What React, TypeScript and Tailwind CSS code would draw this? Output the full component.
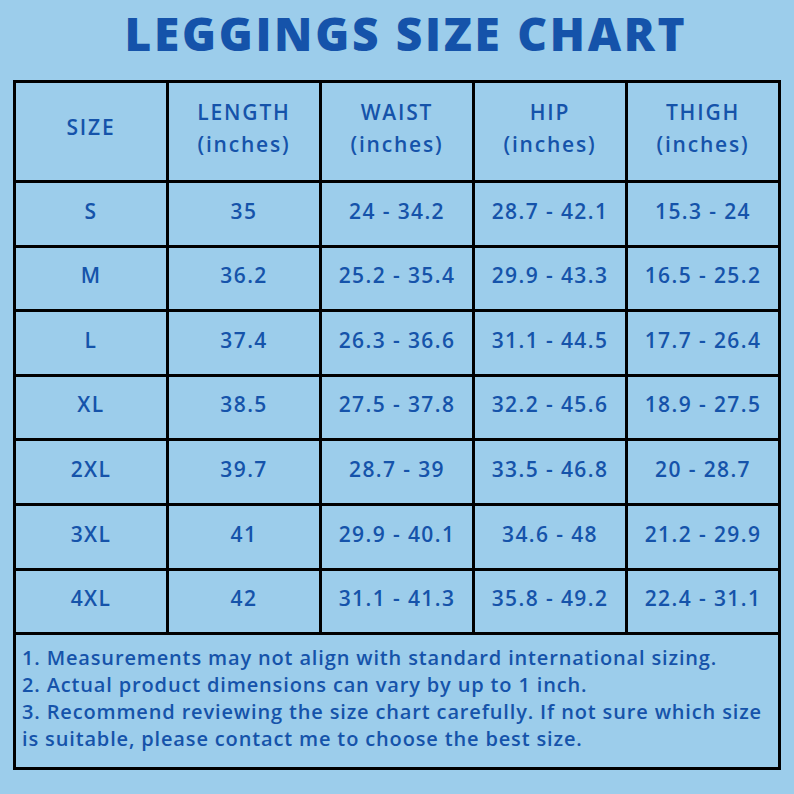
import React from "react";

const rows = [
  ["S", "35", "24 - 34.2", "28.7 - 42.1", "15.3 - 24"],
  ["M", "36.2", "25.2 - 35.4", "29.9 - 43.3", "16.5 - 25.2"],
  ["L", "37.4", "26.3 - 36.6", "31.1 - 44.5", "17.7 - 26.4"],
  ["XL", "38.5", "27.5 - 37.8", "32.2 - 45.6", "18.9 - 27.5"],
  ["2XL", "39.7", "28.7 - 39", "33.5 - 46.8", "20 - 28.7"],
  ["3XL", "41", "29.9 - 40.1", "34.6 - 48", "21.2 - 29.9"],
  ["4XL", "42", "31.1 - 41.3", "35.8 - 49.2", "22.4 - 31.1"],
];

export default function App() {
  return (
    <div
      className="w-[794px] h-[794px] bg-[#9ccdeb] text-[#1553aa] overflow-hidden"
      style={{ fontFamily: "'Open Sans', Lato, sans-serif" }}
    >
      <h1 className="h-[80px] flex items-center justify-center pb-[14px] pl-[18px] text-[46px] font-extrabold tracking-[2.7px] leading-none">
        LEGGINGS SIZE CHART
      </h1>
      <div className="mx-[13px] w-[768px] border-l-[3px] border-t-[3px] border-black">
        <div className="grid grid-cols-5">
          <div className="h-[100px] flex items-center justify-center pb-[7px] border-r-[3px] border-b-[3px] border-black text-[21px] font-semibold tracking-[1.8px]">
            SIZE
          </div>
          {["LENGTH", "WAIST", "HIP", "THIGH"].map((h) => (
            <div
              key={h}
              className="h-[100px] flex flex-col items-center justify-center pb-[8px] border-r-[3px] border-b-[3px] border-black text-[21px] font-semibold tracking-[1.8px] leading-[32px]"
            >
              <span>{h}</span>
              <span>(inches)</span>
            </div>
          ))}
          {rows.map((r) =>
            r.map((c, i) => (
              <div
                key={r[0] + i}
                className="h-[64.6px] flex items-center justify-center pb-[5px] border-r-[3px] border-b-[3px] border-black text-[21px] font-semibold tracking-[1.4px]"
              >
                {c}
              </div>
            ))
          )}
        </div>
        <div className="h-[135px] border-r-[3px] border-b-[3px] border-black pl-[6px] pr-0 pt-[9px] text-[20px] font-semibold tracking-[0.85px] leading-[27px]">
          <p>1. Measurements may not align with standard international sizing.</p>
          <p>2. Actual product dimensions can vary by up to 1 inch.</p>
          <p>
            3. Recommend reviewing the size chart carefully. If not sure which size is suitable, please contact me to choose the best size.
          </p>
        </div>
      </div>
    </div>
  );
}
